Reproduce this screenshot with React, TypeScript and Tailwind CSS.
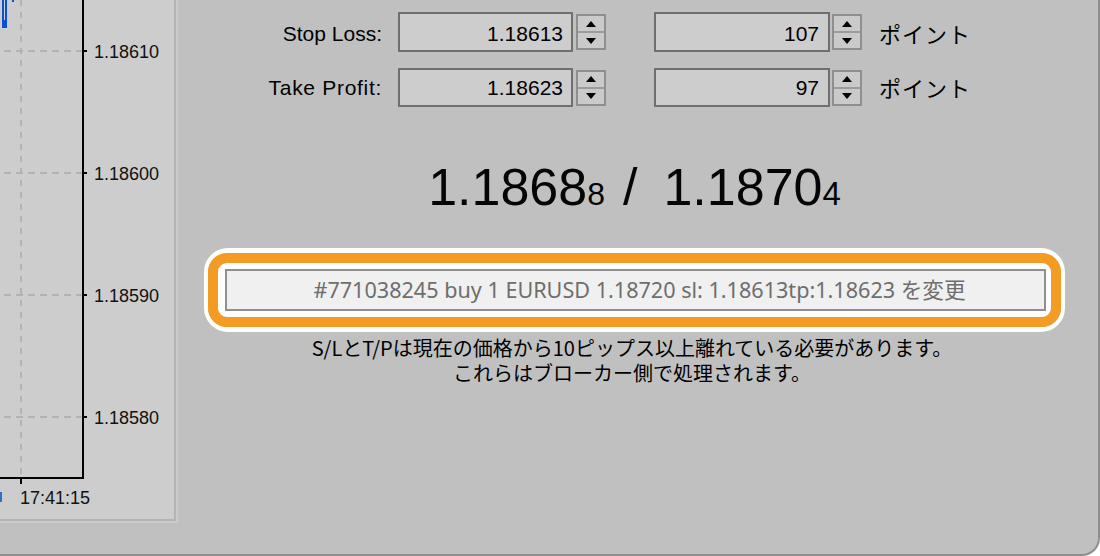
import React from "react";

function Spinner({ className }: { className: string }) {
  return (
    <div className={"flex h-[36px] w-[30px] flex-col border-2 border-[#8f8f8f] bg-[#cacaca] " + className}>
      <div className="flex flex-1 items-center justify-center">
        <svg width="10" height="6" viewBox="0 0 10 6">
          <polygon points="5,0 10,6 0,6" fill="#000" />
        </svg>
      </div>
      <div className="h-[2px] bg-[#9d9d9d]" />
      <div className="flex flex-1 items-center justify-center">
        <svg width="10" height="6" viewBox="0 0 10 6">
          <polygon points="0,0 10,0 5,6" fill="#000" />
        </svg>
      </div>
    </div>
  );
}

function Chart() {
  const grid = [51, 173, 295, 417];
  const labels = ["1.18610", "1.18600", "1.18590", "1.18580"];
  return (
    <svg width="174" height="519" viewBox="0 0 174 519" className="block">
      {grid.map((y) => (
        <line key={y} x1="4" y1={y} x2="82" y2={y} stroke="#b3b3b3" strokeWidth="2" strokeDasharray="7 5" />
      ))}
      <line x1="21" y1="0" x2="21" y2="477" stroke="#b3b3b3" strokeWidth="2" strokeDasharray="6 6" />
      <rect x="82" y="0" width="2" height="479" fill="#000" />
      <rect x="0" y="477" width="84" height="2" fill="#000" />
      {grid.map((y) => (
        <rect key={"t" + y} x="84" y={y - 1} width="3" height="2" fill="#000" />
      ))}
      <rect x="20" y="479" width="2" height="5" fill="#000" />
      {grid.map((y, i) => (
        <text key={"l" + y} x="94" y={y + 7} fontFamily="'Liberation Sans', Arial, sans-serif" fontSize="18" fill="#111">
          {labels[i]}
        </text>
      ))}
      <text x="20" y="504" fontFamily="'Liberation Sans', Arial, sans-serif" fontSize="18" fill="#111">
        17:41:15
      </text>
      <rect x="0" y="492" width="2" height="10" fill="#2f6fd0" />
      <rect x="2" y="0" width="2" height="20" fill="#0b4fd6" />
      <rect x="5" y="0" width="2" height="20" fill="#0b4fd6" />
      <rect x="2" y="20" width="5" height="8" fill="#0b4fd6" />
      <rect x="12" y="0" width="2" height="2" fill="#0b4fd6" />
    </svg>
  );
}

export default function App() {
  return (
    <div className="h-[556px] w-[1100px] overflow-hidden bg-white">
      <div className="flex h-full w-full rounded-br-[18px] border-b-2 border-r-2 border-[#8e8e8e] bg-[#c0c0c0]">
        <div className="h-[523px] w-[178px] shrink-0 border-b-2 border-r-2 border-[#cbcbcb]">
          <div className="h-full w-full border-b-2 border-r-2 border-[#b4b4b4] bg-[#cdcdcd]">
            <Chart />
          </div>
        </div>

        <div className="flex min-w-0 flex-1 flex-col font-['Liberation_Sans',Arial,sans-serif] text-black">
          <div className="mt-[12px] flex h-[40px] items-center">
            <div className="w-[204px] pt-[3px] text-right text-[21px]">Stop Loss:</div>
            <div className="ml-[16px] flex h-[40px] w-[175px] items-center justify-end border-2 border-[#6f6f6f] bg-[#cdcdcd] pr-[8px] pt-[3px] text-[21px]">
              1.18613
            </div>
            <Spinner className="ml-[3px]" />
            <div className="ml-[48px] flex h-[40px] w-[176px] items-center justify-end border-2 border-[#6f6f6f] bg-[#cdcdcd] pr-[9px] pt-[3px] text-[21px]">
              107
            </div>
            <Spinner className="ml-[2px]" />
            <div className="ml-[17px] pt-[3px] font-['Noto_Sans_CJK_JP',sans-serif] text-[22px] tracking-[1px]">ポイント</div>
          </div>

          <div className="mt-[16px] flex h-[39px] items-center">
            <div className="w-[204px] text-right text-[21px] tracking-[0.7px]">Take Profit:</div>
            <div className="ml-[16px] flex h-[39px] w-[175px] items-center justify-end border-2 border-[#6f6f6f] bg-[#cdcdcd] pr-[8px] text-[21px]">
              1.18623
            </div>
            <Spinner className="ml-[3px]" />
            <div className="ml-[48px] flex h-[39px] w-[176px] items-center justify-end border-2 border-[#6f6f6f] bg-[#cdcdcd] pr-[9px] text-[21px]">
              97
            </div>
            <Spinner className="ml-[2px]" />
            <div className="ml-[17px] font-['Noto_Sans_CJK_JP',sans-serif] text-[22px] tracking-[1px]">ポイント</div>
          </div>

          <div className="mt-[54px] flex h-[52px] items-baseline justify-center pr-[7px] leading-none text-[#050505]">
            <span className="text-[52px]">1.1868</span>
            <span className="text-[32px]">8</span>
            <span className="ml-[18px] mr-[26px] text-[52px]">/</span>
            <span className="text-[52px]">1.1870</span>
            <span className="text-[33px]">4</span>
          </div>

          <div className="mt-[35px] flex justify-center pr-[7px]">
            <div className="rounded-[24px] border-x-[4px] border-y-[5px] border-white">
              <div className="rounded-[19px] border-[10px] border-[#f39b22]">
                <div className="rounded-[9px] bg-white pb-[6px] pl-[7px] pr-[5px] pt-[6px]">
                  <div className="flex h-[42px] w-[821px] items-center justify-center border-2 border-[#8f8f8f] bg-[#f0f0f0] pl-[8px] font-['Noto_Sans','Noto_Sans_CJK_JP',sans-serif] text-[21.6px] text-[#6e6e6e]">
                    #771038245 buy 1 EURUSD 1.18720 sl: 1.18613tp:1.18623 を変更
                  </div>
                </div>
              </div>
            </div>
          </div>

          <div className="mt-[3px] flex flex-col items-center pr-[12px] font-['Noto_Sans_CJK_JP',sans-serif] text-[20px] leading-[25px] text-black">
            <div className="h-[25px]">S/LとT/Pは現在の価格から10ピップス以上離れている必要があります。</div>
            <div className="h-[25px]">これらはブローカー側で処理されます。</div>
          </div>
        </div>
      </div>
    </div>
  );
}
